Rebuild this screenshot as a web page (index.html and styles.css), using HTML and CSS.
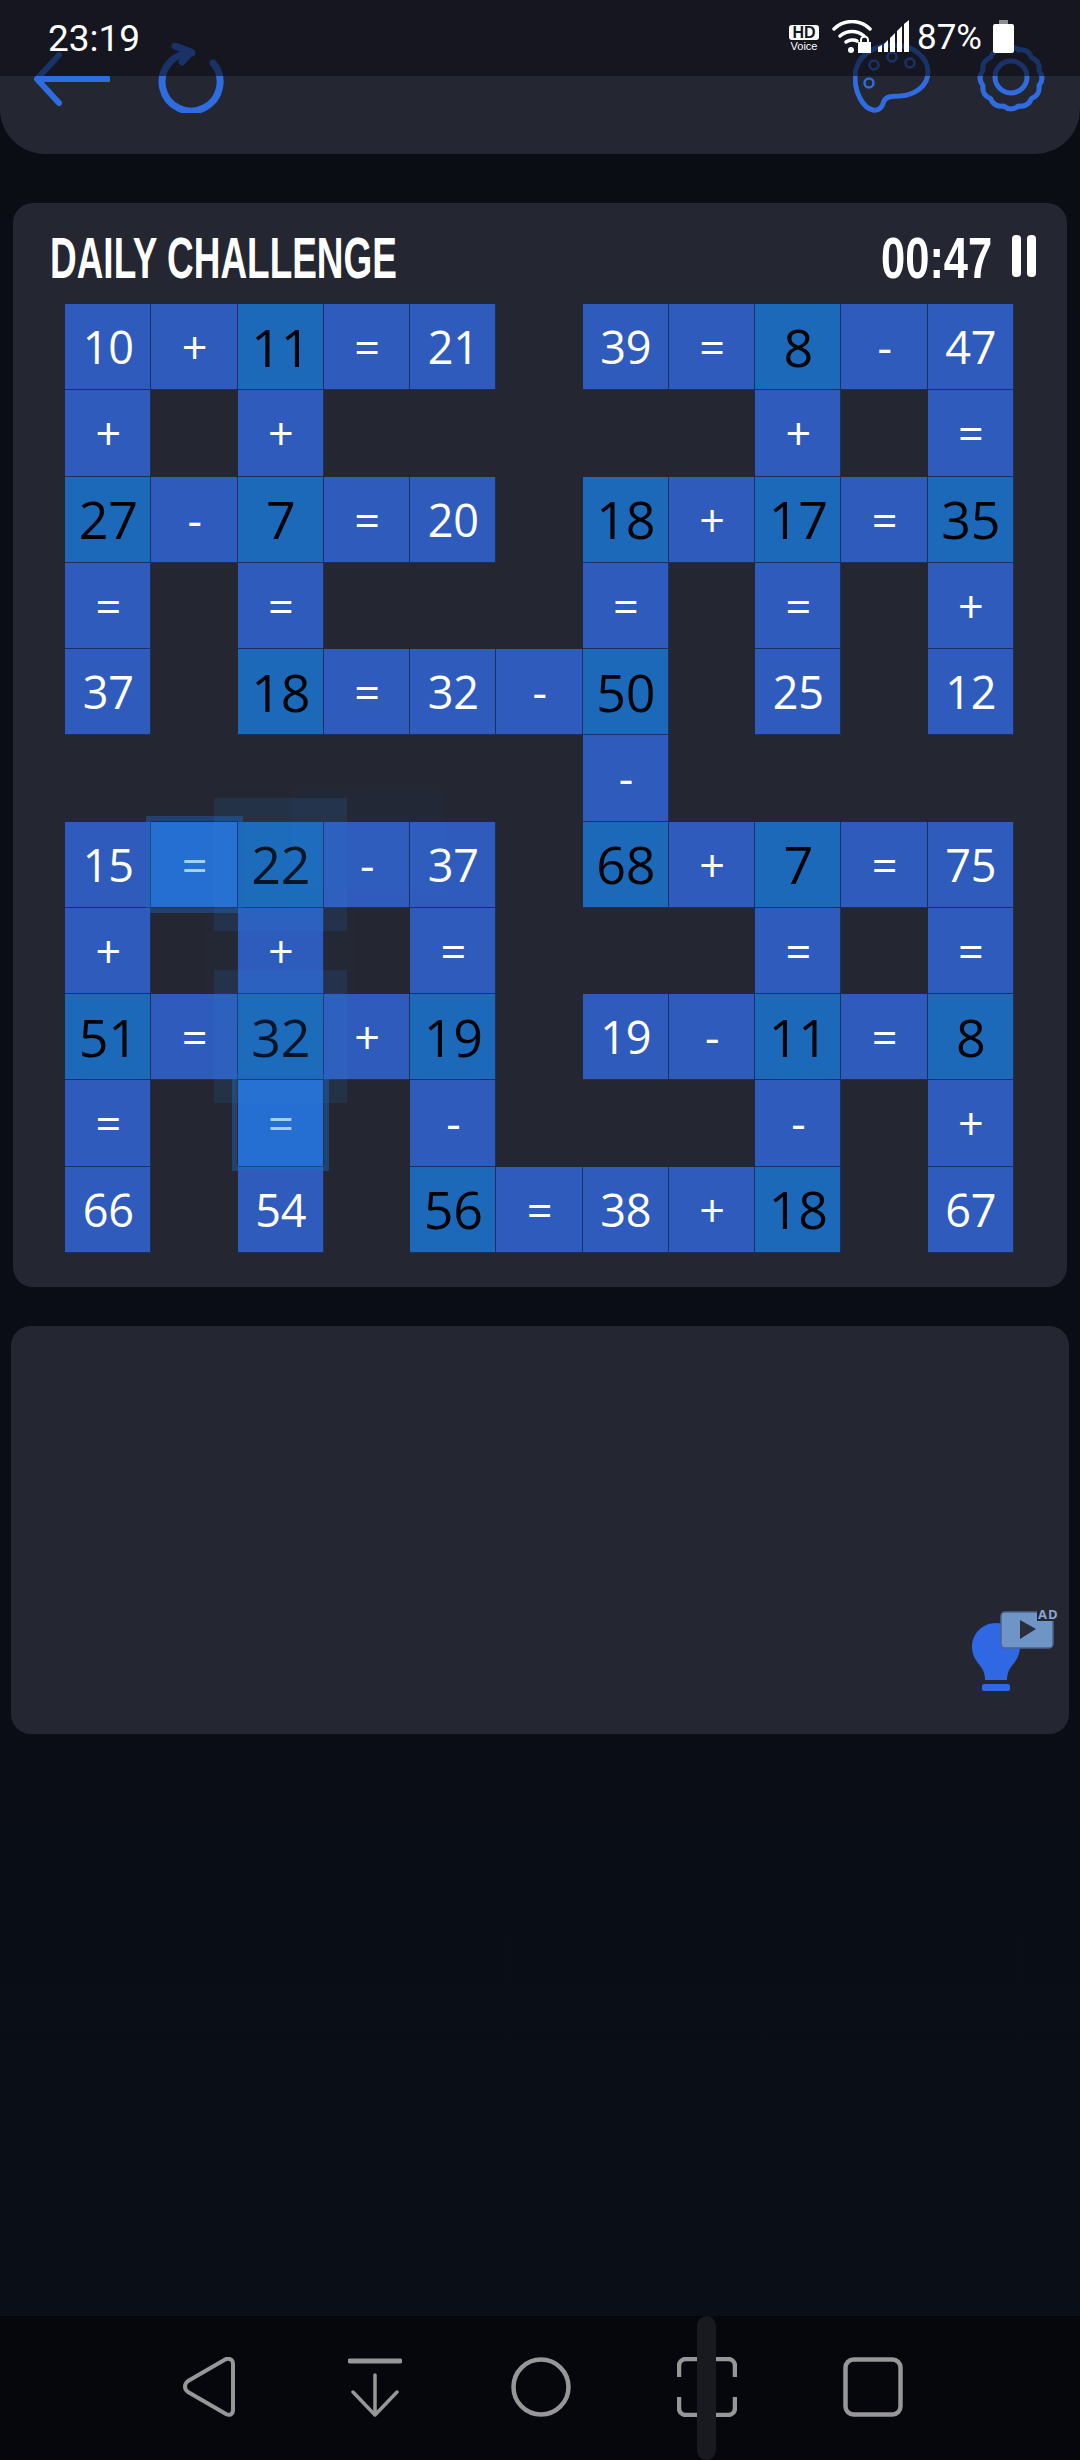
FILE: index.html
```html
<!DOCTYPE html>
<html lang="en">
<head>
<meta charset="utf-8">
<title>Daily Challenge</title>
<link rel="stylesheet" href="styles.css">
</head>
<body>
<div class="screen">
  <header class="topbar">
    <svg class="ic-back" viewBox="0 0 76 54"><path d="M74 27H3M25 3 3 27l22 24" fill="none" stroke="#2f6ce0" stroke-width="6" stroke-linecap="round" stroke-linejoin="round"/></svg>
    <svg class="ic-refresh" viewBox="0 0 66 70"><path d="M55 20A29 29 0 1 1 34 10" fill="none" stroke="#2f6ce0" stroke-width="7" stroke-linecap="round"/><path d="M16 3 32 9 23 19" transform="translate(1 0)" fill="none" stroke="#2f6ce0" stroke-width="7" stroke-linecap="round" stroke-linejoin="round"/></svg>
    <span class="topbar-fill"></span>
    <svg class="ic-palette" viewBox="0 0 78 70"><path d="M2 34C2 14 20 2 40 2C60 2 75 14 75 29C75 43 62 52 47 53C40 53 33 53 31 58C29 65 26 68 20 67C10 65 2 50 2 34Z" fill="none" stroke="#2f6ce0" stroke-width="5"/><g fill="none" stroke="#2f6ce0" stroke-width="2.500"><circle cx="21" cy="22" r="4.500"/><circle cx="39" cy="14" r="4.500"/><circle cx="57" cy="20" r="4.500"/><circle cx="16" cy="40" r="4.500"/></g></svg>
    <svg class="ic-gear" viewBox="0 0 70 70"><g fill="none" stroke="#2f6ce0" stroke-width="5"><circle cx="35" cy="34" r="16"/><path d="M63 27.500Q69 35 63 42.500Q64.400 52 55.500 55.500Q52 64.400 42.500 63Q35 69 27.500 63Q18 64.400 14.500 55.500Q5.600 52 7 42.500Q1 35 7 27.500Q5.600 18 14.500 14.500Q18 5.600 27.500 7Q35 1 42.500 7Q52 5.600 55.500 14.500Q64.400 18 63 27.500Z" stroke-linejoin="round"/></g></svg>
  </header>

  <section class="card board-card">
    <div class="board-head">
      <h1 class="title">DAILY CHALLENGE</h1>
      <div class="timer-wrap"><span class="timer">00:47</span><span class="pause"><i></i><i></i></span></div>
    </div>
    <div class="board" id="board">
      <div class="c n">10</div><div class="c">+</div><div class="c n d">11</div><div class="c">=</div><div class="c n">21</div><div class="e"></div><div class="c n">39</div><div class="c">=</div><div class="c n d">8</div><div class="c">-</div><div class="c n">47</div>
      <div class="c">+</div><div class="e"></div><div class="c">+</div><div class="e"></div><div class="e"></div><div class="e"></div><div class="e"></div><div class="e"></div><div class="c">+</div><div class="e"></div><div class="c">=</div>
      <div class="c n d">27</div><div class="c">-</div><div class="c n d">7</div><div class="c">=</div><div class="c n">20</div><div class="e"></div><div class="c n d">18</div><div class="c">+</div><div class="c n d">17</div><div class="c">=</div><div class="c n d">35</div>
      <div class="c">=</div><div class="e"></div><div class="c">=</div><div class="e"></div><div class="e"></div><div class="e"></div><div class="c">=</div><div class="e"></div><div class="c">=</div><div class="e"></div><div class="c">+</div>
      <div class="c n">37</div><div class="e"></div><div class="c n d">18</div><div class="c">=</div><div class="c n">32</div><div class="c">-</div><div class="c n d">50</div><div class="e"></div><div class="c n">25</div><div class="e"></div><div class="c n">12</div>
      <div class="e"></div><div class="e"></div><div class="e"></div><div class="e"></div><div class="e"></div><div class="e"></div><div class="c">-</div><div class="e"></div><div class="e"></div><div class="e"></div><div class="e"></div>
      <div class="c n">15</div><div class="c sel">=</div><div class="c n d">22</div><div class="c">-</div><div class="c n">37</div><div class="e"></div><div class="c n d">68</div><div class="c">+</div><div class="c n d">7</div><div class="c">=</div><div class="c n">75</div>
      <div class="c">+</div><div class="e"></div><div class="c">+</div><div class="e"></div><div class="c">=</div><div class="e"></div><div class="e"></div><div class="e"></div><div class="c">=</div><div class="e"></div><div class="c">=</div>
      <div class="c n d">51</div><div class="c">=</div><div class="c n d">32</div><div class="c">+</div><div class="c n d">19</div><div class="e"></div><div class="c n">19</div><div class="c">-</div><div class="c n d">11</div><div class="c">=</div><div class="c n d">8</div>
      <div class="c">=</div><div class="e"></div><div class="c sel">=</div><div class="e"></div><div class="c">-</div><div class="e"></div><div class="e"></div><div class="e"></div><div class="c">-</div><div class="e"></div><div class="c">+</div>
      <div class="c n">66</div><div class="e"></div><div class="c n">54</div><div class="e"></div><div class="c n d">56</div><div class="c">=</div><div class="c n">38</div><div class="c">+</div><div class="c n d">18</div><div class="e"></div><div class="c n">67</div>
      <span class="glow g1"></span><span class="glow g2"></span><span class="glow g3"></span><span class="glow g4"></span>
      <span class="halo h1"></span><span class="halo h2"></span>
    </div>
  </section>

  <section class="card hint-card">
    <div class="hint">
      <svg class="ic-bulb" viewBox="0 0 50 70"><path d="M25 1C11 1 1 12 1 25c0 9 5 15 9 20 3 4 4 8 4 13h22c0-5 1-9 4-13 4-5 9-11 9-20C50 12 39 1 25 1Z" fill="#2f68e2"/><rect x="11" y="62" width="28" height="7" rx="2" fill="#2f68e2"/></svg>
      <svg class="ic-ad" viewBox="0 0 54 38"><rect x="1" y="1" width="52" height="36" rx="4" fill="#6f94c6" stroke="#4a6390" stroke-width="1.500"/><path d="M20 9 36 18 20 28Z" fill="#2a2e3c"/></svg>
      <span class="ad-tag">AD</span>
    </div>
  </section>

  <div class="spacer"></div>

  <nav class="navbar">
    <svg class="nv nv-back" viewBox="0 0 54 60"><path d="M5 24 43 2c4-1 7 1 7 5v46c0 4-3 6-7 4L5 35c-4-3-4-8 0-11Z" fill="none" stroke="#979797" stroke-width="4" stroke-linejoin="round"/></svg>
    <svg class="nv nv-down" viewBox="0 0 54 60"><path d="M2 4h50" stroke="#979797" stroke-width="5" stroke-linecap="round"/><path d="M27 18v40M5 35l22 23 22-23" fill="none" stroke="#979797" stroke-width="3.500" stroke-linecap="round" stroke-linejoin="round"/></svg>
    <svg class="nv nv-home" viewBox="0 0 60 60"><circle cx="30" cy="30" r="27.500" fill="none" stroke="#979797" stroke-width="4.500"/></svg>
    <svg class="nv nv-cap" viewBox="0 0 60 60"><path d="M2 20V9c0-4 3-7 7-7h12M39 2h12c4 0 7 3 7 7v11M2 40v11c0 4 3 7 7 7h12M39 58h12c4 0 7-3 7-7V40" fill="none" stroke="#979797" stroke-width="4.500"/></svg>
    <svg class="nv nv-sq" viewBox="0 0 60 60"><rect x="2.500" y="2.500" width="55" height="55" rx="8" fill="none" stroke="#979797" stroke-width="4.500"/></svg>
    <span class="handle"></span>
  </nav>

  <div class="statusbar">
    <span class="clock">23:19</span>
    <span class="status-right">
      <span class="hd"><b>HD</b><small>Voice</small></span>
      <svg class="st-wifi" viewBox="0 0 40 33"><g fill="none" stroke="#fff" stroke-width="3.500" stroke-linecap="round"><path d="M2 9C12-1 28-1 38 9"/><path d="M8 16c7-6 17-6 24 0"/><path d="M14 22c3-2 8-3 11-1"/></g><circle cx="19" cy="30" r="3" fill="#fff"/><path d="M26 22h13v11H26Z" fill="#fff"/><path d="M29 22v-2a3.500 3.500 0 0 1 7 0v2" fill="none" stroke="#fff" stroke-width="2"/></svg>
      <svg class="st-signal" viewBox="0 0 32 32"><path fill="#fff" d="M0 27l4-2v7H0ZM6 24l4-4v12H6ZM12 18l5-5v19h-5ZM19 11l5-5v26h-5ZM26 4l5-4v32h-5Z"/></svg>
      <span class="pct">87%</span>
      <svg class="st-batt" viewBox="0 0 21 33"><rect x="6" y="0" width="9" height="4" fill="#8d8d8d"/><rect x="0" y="4" width="21" height="29" rx="2" fill="#fff"/></svg>
    </span>
  </div>
</div>
</body>
</html>
```
FILE: styles.css
```css
* { box-sizing: border-box; }
html, body { margin: 0; padding: 0; background: #0a0d15; }
.screen {
  position: relative;
  width: 1080px;
  height: 2460px;
  display: flex;
  flex-direction: column;
  overflow: hidden;
  background: linear-gradient(#0b0d15, #0a0e17);
  font-family: "Open Sans", sans-serif;
}
.topbar {
  height: 154px;
  background: #242632;
  border-radius: 0 0 45px 45px;
  display: flex;
  align-items: flex-start;
  padding: 43px 34px 0 34px;
  flex: none;
}
.topbar-fill { flex: 1; }
.ic-back { width: 76px; height: 54px; margin-top: 9px; }
.ic-refresh { width: 66px; height: 70px; margin-left: 48px; }
.ic-palette { width: 78px; height: 70px; margin-right: 45px; }
.ic-gear { width: 70px; height: 70px; }
.statusbar {
  position: absolute;
  top: 0; left: 0;
  width: 1080px;
  height: 76px;
  background: rgba(10, 10, 18, .58);
  color: #fff;
  font-family: Roboto, sans-serif;
  display: flex;
  justify-content: space-between;
  padding: 0 66px 0 48px;
}
.clock { font-size: 37px; line-height: 38px; margin-top: 20px; }
.status-right { display: flex; align-items: flex-start; padding-top: 20px; }
.hd { width: 30px; display: flex; flex-direction: column; align-items: center; margin-top: 5px; }
.hd b { width: 30px; height: 15px; background: #fff; color: #15161f; font: 700 16px/15px "Liberation Sans", sans-serif; text-align: center; border-radius: 3px; }
.hd small { font: 400 11px/12px "Liberation Sans", sans-serif; }
.st-wifi { width: 40px; height: 33px; margin-left: 13px; }
.st-signal { width: 32px; height: 32px; margin-left: 6px; }
.pct { font-size: 35px; line-height: 36px; margin-left: 7px; width: 64px; white-space: nowrap; }
.st-batt { width: 21px; height: 33px; margin-left: 12px; }

.card { background: #242632; flex: none; }
.board-card {
  margin: 49px 13px 0;
  height: 1084px;
  border-radius: 20px;
  padding: 0 0 0 52px;
}
.board-head {
  display: flex;
  justify-content: space-between;
  align-items: flex-start;
  height: 101px;
  padding: 26px 31px 0 0;
  margin-left: -15px;
}
.title, .timer {
  margin: 0;
  color: #fff;
  font: 700 58px/58px "Liberation Sans", sans-serif;
  display: block;
  transform-origin: left top;
}
.title { transform: scaleX(.637); white-space: nowrap; }
.timer-wrap { display: flex; gap: 21px; align-items: flex-start; }
.timer { transform: scaleX(.75); width: 110px; }
.pause { display: flex; gap: 6px; margin-top: 6px; }
.pause i { display: block; width: 9px; height: 42px; background: #fff; border-radius: 4px; }
.board {
  position: relative;
  display: grid;
  grid-template-columns: repeat(11, 86.25px);
  grid-auto-rows: 86.25px;
  width: 949px;
}
.c {
  background: #2f5cbc;
  border-right: 1.5px solid #1b2f63;
  border-bottom: 1.5px solid #1b2f63;
  color: #fff;
  display: flex;
  align-items: center;
  justify-content: center;
  padding-left: 1.5px;
  font-size: 45px;
  line-height: 1;
}
.d { background: #1b69b8; color: #020407; font-size: 52px; }
.sel { background: #266fd2; color: #a9d4f7; }
.glow {
  position: absolute;
  width: 133px;
  height: 133px;
  background: rgba(40, 130, 210, .14);
  pointer-events: none;
}
.g1 { left: 149px; top: 494px; }
.g2 { left: 149px; top: 666px; }
.g3 { left: 227px; top: 486px; width: 153px; height: 100px; background: rgba(40, 130, 210, .03); }
.g4 { left: 138px; top: 610px; width: 154px; height: 110px; background: rgba(40, 130, 210, .025); }
.halo {
  position: absolute;
  width: 97px;
  height: 97px;
  background: rgba(40, 120, 220, .04);
  border: 5px solid rgba(30, 105, 190, .4);
  pointer-events: none;
}
.h1 { left: 81px; top: 512px; }
.h2 { left: 167px; top: 770px; }

.hint-card {
  margin: 39px 11px 0;
  height: 408px;
  border-radius: 20px;
  position: relative;
}
.hint { position: absolute; left: 960px; top: 282px; width: 90px; height: 85px; }
.ic-bulb { position: absolute; left: 0; top: 14px; width: 50px; height: 70px; }
.ic-ad { position: absolute; left: 29px; top: 3px; width: 54px; height: 38px; }
.ad-tag {
  position: absolute;
  left: 66px; top: 0;
  padding: 0 1px;
  background: #242632;
  color: #8aa6cf;
  font: 700 13px/13px "Open Sans", sans-serif;
  letter-spacing: 1px;
}
.spacer { flex: 1; }
.navbar {
  position: relative;
  height: 144px;
  background: #05070c;
  flex: none;
  display: flex;
  align-items: flex-start;
  padding: 41px 0 0 183px;
}
.nv { height: 60px; flex: none; }
.nv-back { width: 54px; }
.nv-down { width: 54px; margin-left: 111px; }
.nv-home { width: 60px; margin-left: 109px; }
.nv-cap { width: 60px; margin-left: 106px; }
.nv-sq { width: 60px; margin-left: 106px; }
.handle {
  position: absolute;
  left: 697px; top: 0;
  width: 19px; height: 144px;
  border-radius: 10px;
  background: #191a1f;
}
```
